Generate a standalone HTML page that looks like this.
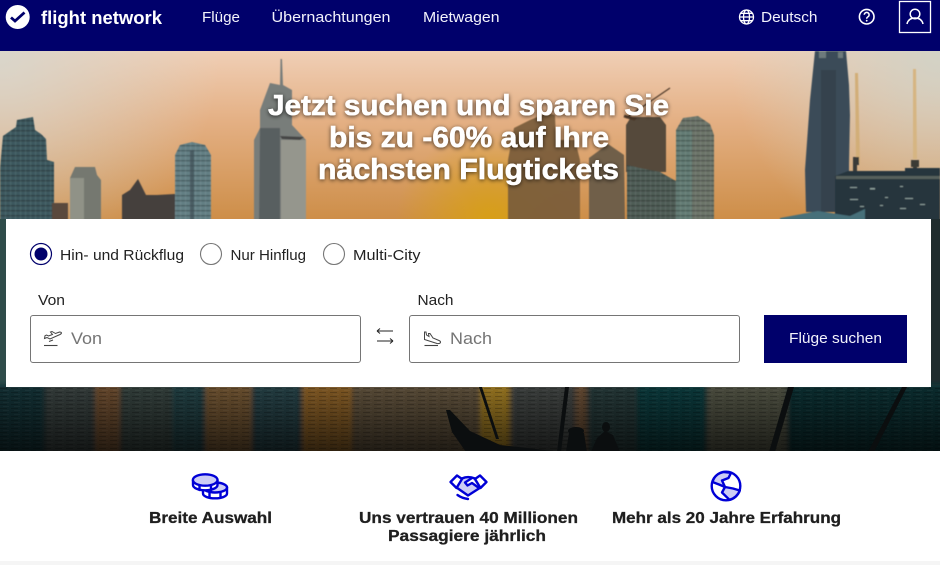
<!DOCTYPE html>
<html lang="de"><head><meta charset="utf-8"><title>Flight Network</title>
<style>
html,body{margin:0;padding:0;width:940px;height:565px;overflow:hidden;background:#fff}
svg{display:block}
text{font-family:"Liberation Sans",sans-serif}
.nav{fill:#f2f2fb;font-size:15px}
.lb{fill:#222;font-size:14.5px}
.ft{fill:#1f1f1f;font-size:16px;font-weight:700;stroke:#1f1f1f;stroke-width:.3px}
.h{fill:#fff;font-size:29px;font-weight:700;stroke:#fff;stroke-width:.5px}
</style></head><body>
<svg width="940" height="565" viewBox="0 0 940 565" xmlns="http://www.w3.org/2000/svg">
<defs>
<linearGradient id="sky" x1="0" y1="51" x2="0" y2="225" gradientUnits="userSpaceOnUse">
<stop offset="0" stop-color="#f0cfb6"/><stop offset=".4" stop-color="#e4b084"/><stop offset="1" stop-color="#cc8c45"/></linearGradient>
<radialGradient id="cl" cx="0" cy="51" r="220" gradientUnits="userSpaceOnUse"><stop offset="0" stop-color="#d8d6cc" stop-opacity=".95"/><stop offset="1" stop-color="#d8d6cc" stop-opacity="0"/></radialGradient>
<radialGradient id="cr" cx="940" cy="51" r="210" gradientUnits="userSpaceOnUse"><stop offset="0" stop-color="#d2d2c6"/><stop offset="1" stop-color="#d2d2c6" stop-opacity="0"/></radialGradient>
<radialGradient id="y" cx="490" cy="225" r="95" gradientUnits="userSpaceOnUse"><stop offset="0" stop-color="#d8a014"/><stop offset="1" stop-color="#d8a014" stop-opacity="0"/></radialGradient>
<linearGradient id="dk" x1="0" y1="387" x2="0" y2="451" gradientUnits="userSpaceOnUse"><stop offset="0" stop-color="#000" stop-opacity=".2"/><stop offset="1" stop-color="#000" stop-opacity=".7"/></linearGradient>
<filter id="b" x="-5%" y="-5%" width="110%" height="110%"><feGaussianBlur stdDeviation=".6"/></filter>
<filter id="b2" x="-5%" y="-5%" width="110%" height="110%"><feGaussianBlur stdDeviation="2.500"/></filter>
<filter id="s" x="-10%" y="-30%" width="120%" height="160%"><feDropShadow dx="0" dy="1" stdDeviation="2" flood-color="#000" flood-opacity=".7"/></filter>
<pattern id="win" width="5" height="5" patternUnits="userSpaceOnUse"><rect width="5" height="1.400" fill="#000" opacity=".25"/><rect width="1.200" height="5" fill="#fff" opacity=".07"/></pattern>
<pattern id="rip" width="11" height="4" patternUnits="userSpaceOnUse"><rect width="7" height="1" fill="#000" opacity=".22"/><rect x="3" y="2" width="6" height="1" fill="#fff" opacity=".05"/></pattern>
</defs>

<!-- sky -->
<rect y="51" width="940" height="172" fill="url(#sky)"/>
<rect y="51" width="940" height="172" fill="url(#cl)"/>
<rect y="51" width="940" height="172" fill="url(#cr)"/>
<rect y="51" width="940" height="172" fill="url(#y)"/>

<!-- skyline -->
<g filter="url(#b)">
<path d="M0 168 3 136 16 127 17 120 33 117 35 130 41 134 46 139 47 160 54 162V225H0Z" fill="#3c595f"/>
<path d="M0 168 3 136 16 127 17 120 33 117 35 130 41 134 46 139 47 160 54 162V225H0Z" fill="url(#win)"/>
<path d="M52 203H68V225H52Z" fill="#5a4a3e"/>
<path d="M70 178 75 167H95L97 175 101 180V225H70Z" fill="#75786f"/>
<path d="M70 178H84V225H70Z" fill="#a6a79a" opacity=".55"/>
<path d="M122 195 130 190 138 179 146 195 157 195 175 194V225H122Z" fill="#45413c"/>
<path d="M175 155 180 145 192 142 205 145 211 155V225H175Z" fill="#637f84"/>
<path d="M175 155 180 145 192 142 205 145 211 155V225H175Z" fill="url(#win)"/>
<path d="M190 150h4v75h-4z" fill="#3f4f55" opacity=".7"/>
<path d="M280.500 59 282 59 283 85 292 90V125L306 140V225H254V140L260 128V110L270 83 280 85Z" fill="#787d7a"/>
<path d="M260 128H280V225H259Z" fill="#50575a" opacity=".8"/>
<path d="M281 140H306V225H281Z" fill="#a9a79a" opacity=".6"/>
<path d="M280 136 304 137 300 140 282 139Z" fill="#444"/>
<path d="M508 160 514 128 530 120 547 113 555 115 556 140 575 140 580 160V225H508Z" fill="#7a5c3a" opacity=".92"/>
<path d="M589 158 608 144 624 155 625 225H589Z" fill="#6f5e48"/>
<path d="M626 125 631 117H660L666 125V172H626Z" fill="#54483b"/>
<path d="M627 165 640 168 660 172 674 180 693 188V225H627Z" fill="#4f5d57"/>
<path d="M627 165 640 168 660 172 674 180 693 188V225H627Z" fill="url(#win)"/>
<path d="M676 130 683 118 698 116 710 124 714 135 714 225H676Z" fill="#6c7469"/>
<path d="M676 130H692V225H676Z" fill="#5f8079" opacity=".7"/>
<path d="M676 130 683 118 698 116 710 124 714 135 714 225H676Z" fill="url(#win)"/>
<path d="M626 118 670 88" stroke="#4f3a2a" stroke-width="1.200"/>
<path d="M624 116 634 119 633 120" stroke="#4f3a2a" stroke-width="3" fill="none"/>
<path d="M815 51H846L849 85 850 115 849 165V212H806L805 170 810 100Z" fill="#3b4c59"/>
<path d="M819 51H826V58H819ZM838 52H843V58H838Z" fill="#6d7a7c"/>
<path d="M821 70H836V212H821Z" fill="#34424e"/>
<path d="M855 73h3l2 90h-4z" fill="#d2ae78"/>
<path d="M853 157h6v8h-6zM853 165h4v10h-4z" fill="#3b3b38"/>
<path d="M913 69h3l1 90h-4z" fill="#d6b582"/>
<path d="M911 160h8v7h-8zM913 167h4v6h-4z" fill="#3a3a36"/>
<path d="M835 176 848 171H905V168H940V225H835Z" fill="#26363c"/>
<path d="M836 176H940V179H836Z" fill="#56605c"/>
<g fill="#8a9c98"><rect x="850" y="187" width="7" height="1"/><rect x="870" y="188" width="5" height="1.500"/><rect x="900" y="186" width="3" height="1"/><rect x="850" y="199" width="8" height="1"/><rect x="885" y="197" width="3" height="1"/><rect x="905" y="198" width="8" height="1"/><rect x="860" y="206" width="4" height="1"/><rect x="880" y="205" width="3" height="1"/><rect x="900" y="208" width="6" height="1"/><rect x="920" y="204" width="5" height="1"/></g>
<path d="M780 218 818 211 850 216 865 209V225H780Z" fill="#47707a"/>
</g>

<!-- water -->
<rect y="219" width="8" height="170" fill="#2f4c4a"/>
<rect x="929" y="219" width="12" height="170" fill="#1f2c2e"/>
<g filter="url(#b2)">
<rect x="-5" y="384" width="50" height="75" fill="#17393c"/>
<rect x="45" y="384" width="50" height="75" fill="#3c4644"/>
<rect x="95" y="384" width="25" height="75" fill="#7a5636"/>
<rect x="120" y="384" width="52" height="75" fill="#3b4a45"/>
<rect x="172" y="384" width="33" height="75" fill="#264a4e"/>
<rect x="205" y="384" width="47" height="75" fill="#7f5e38"/>
<rect x="252" y="384" width="50" height="75" fill="#2c4a50"/>
<rect x="302" y="384" width="50" height="75" fill="#9a6a2a"/>
<rect x="352" y="384" width="128" height="75" fill="#6a5a42"/>
<rect x="480" y="384" width="30" height="75" fill="#b38a28"/>
<rect x="510" y="384" width="65" height="75" fill="#474c48"/>
<rect x="575" y="384" width="12" height="75" fill="#75563a"/>
<rect x="587" y="384" width="50" height="75" fill="#2c4040"/>
<rect x="637" y="384" width="70" height="75" fill="#0f4345"/>
<rect x="707" y="384" width="80" height="75" fill="#5a5b4b"/>
<rect x="787" y="384" width="158" height="75" fill="#0f3439"/>
</g>
<rect y="387" width="940" height="64" fill="url(#rip)"/>
<rect y="387" width="940" height="64" fill="url(#dk)"/>
<!-- boat silhouette -->
<g fill="#0b0e0f">
<path d="M479 387h3l17 52h-3z"/><path d="M565 387h4l-8 65h-4z"/><path d="M788 387h6l-19 65h-6z"/><path d="M902 387h5l-33 65h-6z"/>
<path d="M446 410 450 410 470 431 500 445 562 452H466L452 432Z"/>
<ellipse cx="576" cy="431" rx="8" ry="4"/><path d="M569 433h15l3 19h-21z"/><ellipse cx="606" cy="427" rx="4" ry="5"/><path d="M597 438 605 431 613 435 620 452H591Z"/>
</g>
<rect y="451" width="940" height="114" fill="#fff"/>
<rect y="561" width="940" height="4" fill="#f5f5f5"/>

<!-- nav -->
<rect width="940" height="51" fill="#00006b"/>
<circle cx="17.700" cy="17" r="12" fill="#fff"/>
<path d="M11 17.500 15 21 24.500 12.500" fill="none" stroke="#00006b" stroke-width="2.800"/>
<text x="41" y="24" font-size="18.500" font-weight="700" fill="#fff" textLength="121" lengthAdjust="spacingAndGlyphs">flight network</text>
<text class="nav" x="202" y="22" textLength="38" lengthAdjust="spacingAndGlyphs">Flüge</text>
<text class="nav" x="271.500" y="22" textLength="119" lengthAdjust="spacingAndGlyphs">Übernachtungen</text>
<text class="nav" x="423" y="22" textLength="76.500" lengthAdjust="spacingAndGlyphs">Mietwagen</text>
<g fill="none" stroke="#fff" stroke-width="1.300">
<circle cx="746.500" cy="17" r="7"/><ellipse cx="746.500" cy="17" rx="3" ry="7"/><path d="M739.500 17h14M740.500 13.300h12M740.500 20.700h12"/>
<circle cx="866.700" cy="16.700" r="7.300" stroke-width="1.600"/>
<path d="M864.300 14.800a2.400 2.400 0 1 1 3.700 2c-.9.600-1.300 1-1.300 2" stroke-width="1.500"/>
<rect x="899.500" y="1.500" width="31" height="31"/>
<circle cx="915" cy="14" r="4.800" stroke-width="1.500"/>
<path d="M907 24c1-4.500 4-6 8-6s7 1.500 8 6" stroke-width="1.500"/>
</g>
<circle cx="866.700" cy="20.700" r=".9" fill="#fff"/>
<text class="nav" x="761" y="22" textLength="56.500" lengthAdjust="spacingAndGlyphs">Deutsch</text>

<!-- heading -->
<g filter="url(#s)">
<text class="h" x="268" y="115" textLength="401" lengthAdjust="spacingAndGlyphs">Jetzt suchen und sparen Sie</text>
<text class="h" x="329" y="147" textLength="280" lengthAdjust="spacingAndGlyphs">bis zu -60% auf Ihre</text>
<text class="h" x="318" y="179" textLength="301" lengthAdjust="spacingAndGlyphs">nächsten Flugtickets</text>
</g>

<!-- card -->
<rect x="6" y="219" width="925" height="168" fill="#fff"/>
<circle cx="41" cy="254" r="10.500" fill="#fff" stroke="#00006b" stroke-width="1.200"/>
<circle cx="41" cy="254" r="6.500" fill="#00006b"/>
<circle cx="211" cy="254" r="10.500" fill="#fff" stroke="#757575" stroke-width="1.100"/>
<circle cx="334" cy="254" r="10.500" fill="#fff" stroke="#757575" stroke-width="1.100"/>
<text class="lb" x="60" y="260" textLength="124" lengthAdjust="spacingAndGlyphs">Hin- und Rückflug</text>
<text class="lb" x="230.500" y="260" textLength="75.500" lengthAdjust="spacingAndGlyphs">Nur Hinflug</text>
<text class="lb" x="353" y="260" textLength="67.500" lengthAdjust="spacingAndGlyphs">Multi-City</text>
<text class="lb" x="38" y="305" textLength="27" lengthAdjust="spacingAndGlyphs">Von</text>
<text class="lb" x="417.500" y="305" textLength="36" lengthAdjust="spacingAndGlyphs">Nach</text>

<rect x="30.500" y="315.500" width="330" height="47" rx="2.500" fill="#fff" stroke="#757575"/>
<rect x="409.500" y="315.500" width="330" height="47" rx="2.500" fill="#fff" stroke="#757575"/>
<path d="M44 345.500H57.500" stroke="#444" stroke-width="1.100"/>
<path d="M44.500 338.500 47 337.500 50 339 60 334.500C62 333.500 62 332 59.500 332L55.500 333.500 52 331.500 50.500 332 52.500 334.500 48.500 336 46.500 335 45 335.700Z M49 341.500 53 340" fill="none" stroke="#444" stroke-width="1"/>
<path d="M424.500 345.500H438" stroke="#444" stroke-width="1.100"/>
<path d="M424.500 332V339.500L437 343.500C441 344 441.500 341.500 439 340.500L433 338 430 333.500 428.500 333.500 429 336.500 426.500 335 426 332Z" fill="none" stroke="#444" stroke-width="1"/>
<text x="71" y="344" font-size="16.500" fill="#757575" textLength="31" lengthAdjust="spacingAndGlyphs">Von</text>
<text x="450" y="344" font-size="16.500" fill="#757575" textLength="42" lengthAdjust="spacingAndGlyphs">Nach</text>
<path d="M377 331H393M377 331l3-2.500M377 331l3 2.500M377 341H393M393 341l-3-2.500M393 341l-3 2.500" fill="none" stroke="#222" stroke-width="1"/>
<rect x="764" y="315" width="143" height="48" fill="#00006b"/>
<text x="789" y="343" font-size="14.500" fill="#f2f2fb" textLength="93" lengthAdjust="spacingAndGlyphs">Flüge suchen</text>

<!-- features -->
<g stroke="#0000d6" stroke-width="2.400" fill="none" stroke-linejoin="round" stroke-linecap="round">
<!-- coins -->
<path d="M203 487V493.500c0 2.800 5.400 4.800 12 4.800s12-2 12-4.800V487Z" fill="#fff"/>
<ellipse cx="215" cy="487.500" rx="12" ry="5" fill="#ccccf5"/>
<path d="M209.500 493v4.500M220.500 493v4.500"/>
<path d="M193 480V485c0 3 5.500 5.300 12.200 5.300s12.300-2.300 12.300-5.300V480Z" fill="#fff"/>
<ellipse cx="205.200" cy="480" rx="12.300" ry="5.700" fill="#ccccf5"/>
<path d="M199.500 485.500v4.500M211 485.500v4.500"/>
<!-- handshake -->
<path d="M458 478 467 476 473 477 480 478 482 487 468 495.500 456 487Z" fill="#ccccf5" stroke="none"/>
<path d="M450.500 482 457 475.500 462 479 456.500 488Z" fill="#fff"/>
<path d="M486.500 482 480 475.500 475 479 480.500 488Z" fill="#fff"/>
<path d="M456.500 487.500 468 495.500 480.500 487.500"/>
<path d="M462 478.500C466 476.500 470 476.500 475 478.500"/>
<path d="M472 478 465 482.500 467.500 485.500 472 483 479 488" fill="#fff"/>
<path d="M457.500 495C461 497.500 464 498.500 468 499"/>
<!-- globe -->
<circle cx="726" cy="486" r="14.300"/>
<path d="M724 472C718 473 714 477 712.500 482L719 484.500 725 487 722 480.500 728.500 478 731 472.800Z" fill="#ccccf5"/>
<path d="M725 487 722 492.500 729.500 499.800C734.500 498.500 738 495 739.800 490.500L733 488.500Z" fill="#ccccf5"/>
</g>
<text class="ft" x="149" y="523" textLength="123" lengthAdjust="spacingAndGlyphs">Breite Auswahl</text>
<text class="ft" x="359" y="523" textLength="219" lengthAdjust="spacingAndGlyphs">Uns vertrauen 40 Millionen</text>
<text class="ft" x="388" y="541" textLength="158" lengthAdjust="spacingAndGlyphs">Passagiere jährlich</text>
<text class="ft" x="612" y="523" textLength="229" lengthAdjust="spacingAndGlyphs">Mehr als 20 Jahre Erfahrung</text>
</svg>
</body></html>
